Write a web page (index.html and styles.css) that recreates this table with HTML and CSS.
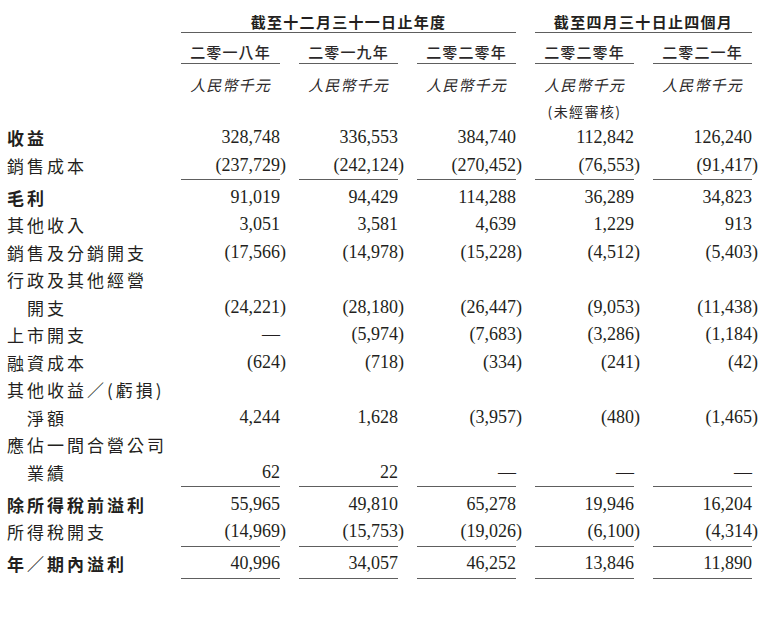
FILE: index.html
```html
<!DOCTYPE html>
<html lang="zh-Hant">
<head>
<meta charset="utf-8">
<title>財務資料</title>
<link rel="stylesheet" href="styles.css">
</head>
<body>
<div class="page">
  <div class="row head1">
    <div></div>
    <div class="hcell span3">截至十二月三十一日止年度</div>
    <div class="hcell span2">截至四月三十日止四個月</div>
  </div>
  <div class="row years">
    <div></div>
    <div class="ycell">二零一八年</div>
    <div class="ycell">二零一九年</div>
    <div class="ycell">二零二零年</div>
    <div class="ycell">二零二零年</div>
    <div class="ycell">二零二一年</div>
  </div>
  <div class="row units">
    <div></div>
    <div class="ucell">人民幣千元</div>
    <div class="ucell">人民幣千元</div>
    <div class="ucell">人民幣千元</div>
    <div class="ucell">人民幣千元</div>
    <div class="ucell">人民幣千元</div>
  </div>
  <div class="row note">
    <div></div><div></div><div></div><div></div>
    <div class="ncell">(未經審核)</div>
    <div></div>
  </div>

  <div class="body">
    <div class="row data first">
      <div class="lbl bold">收益</div>
      <div class="num">328,748</div><div class="num">336,553</div><div class="num">384,740</div><div class="num">112,842</div><div class="num">126,240</div>
    </div>
    <div class="row data ul">
      <div class="lbl">銷售成本</div>
      <div class="num">(237,729<span class="rp">)</span></div><div class="num">(242,124<span class="rp">)</span></div><div class="num">(270,452<span class="rp">)</span></div><div class="num">(76,553<span class="rp">)</span></div><div class="num">(91,417<span class="rp">)</span></div>
    </div>
    <div class="row data after">
      <div class="lbl bold">毛利</div>
      <div class="num">91,019</div><div class="num">94,429</div><div class="num">114,288</div><div class="num">36,289</div><div class="num">34,823</div>
    </div>
    <div class="row data">
      <div class="lbl">其他收入</div>
      <div class="num">3,051</div><div class="num">3,581</div><div class="num">4,639</div><div class="num">1,229</div><div class="num">913</div>
    </div>
    <div class="row data">
      <div class="lbl">銷售及分銷開支</div>
      <div class="num">(17,566<span class="rp">)</span></div><div class="num">(14,978<span class="rp">)</span></div><div class="num">(15,228<span class="rp">)</span></div><div class="num">(4,512<span class="rp">)</span></div><div class="num">(5,403<span class="rp">)</span></div>
    </div>
    <div class="row data">
      <div class="lbl">行政及其他經營</div>
      <div></div><div></div><div></div><div></div><div></div>
    </div>
    <div class="row data">
      <div class="lbl indent">開支</div>
      <div class="num">(24,221<span class="rp">)</span></div><div class="num">(28,180<span class="rp">)</span></div><div class="num">(26,447<span class="rp">)</span></div><div class="num">(9,053<span class="rp">)</span></div><div class="num">(11,438<span class="rp">)</span></div>
    </div>
    <div class="row data">
      <div class="lbl">上市開支</div>
      <div class="num">—</div><div class="num">(5,974<span class="rp">)</span></div><div class="num">(7,683<span class="rp">)</span></div><div class="num">(3,286<span class="rp">)</span></div><div class="num">(1,184<span class="rp">)</span></div>
    </div>
    <div class="row data">
      <div class="lbl">融資成本</div>
      <div class="num">(624<span class="rp">)</span></div><div class="num">(718<span class="rp">)</span></div><div class="num">(334<span class="rp">)</span></div><div class="num">(241<span class="rp">)</span></div><div class="num">(42<span class="rp">)</span></div>
    </div>
    <div class="row data">
      <div class="lbl">其他收益／(虧損)</div>
      <div></div><div></div><div></div><div></div><div></div>
    </div>
    <div class="row data">
      <div class="lbl indent">淨額</div>
      <div class="num">4,244</div><div class="num">1,628</div><div class="num">(3,957<span class="rp">)</span></div><div class="num">(480<span class="rp">)</span></div><div class="num">(1,465<span class="rp">)</span></div>
    </div>
    <div class="row data">
      <div class="lbl">應佔一間合營公司</div>
      <div></div><div></div><div></div><div></div><div></div>
    </div>
    <div class="row data ul">
      <div class="lbl indent">業績</div>
      <div class="num">62</div><div class="num">22</div><div class="num">—</div><div class="num">—</div><div class="num">—</div>
    </div>
    <div class="row data after">
      <div class="lbl bold">除所得稅前溢利</div>
      <div class="num">55,965</div><div class="num">49,810</div><div class="num">65,278</div><div class="num">19,946</div><div class="num">16,204</div>
    </div>
    <div class="row data ul">
      <div class="lbl">所得稅開支</div>
      <div class="num">(14,969<span class="rp">)</span></div><div class="num">(15,753<span class="rp">)</span></div><div class="num">(19,026<span class="rp">)</span></div><div class="num">(6,100<span class="rp">)</span></div><div class="num">(4,314<span class="rp">)</span></div>
    </div>
    <div class="row data after ul">
      <div class="lbl bold">年／期內溢利</div>
      <div class="num">40,996</div><div class="num">34,057</div><div class="num">46,252</div><div class="num">13,846</div><div class="num">11,890</div>
    </div>
  </div>
</div>
</body>
</html>
```

FILE: styles.css
```css
html, body {
  margin: 0;
  padding: 0;
  background: #ffffff;
}

body {
  color: #231f20;
  font-family: "Liberation Serif", "Noto Sans CJK TC", serif;
}

.page {
  width: 765px;
  height: 624px;
  padding: 12px 0 0 7px;
  box-sizing: border-box;
}

.row {
  display: grid;
  grid-template-columns: 155px repeat(5, 99px);
  column-gap: 19px;
}

/* header rows */
.hcell,
.ycell,
.ucell,
.ncell {
  font-family: "Noto Sans CJK TC", "Noto Sans CJK SC", sans-serif;
  text-align: center;
  white-space: nowrap;
}

.head1 .hcell {
  font-size: 15px;
  font-weight: 700;
  letter-spacing: 1.3px;
  line-height: 20px;
  border-bottom: 1.5px solid #5e5e5e;
}

.span3 { grid-column: 2 / span 3; }
.span2 { grid-column: 5 / span 2; }

.years { margin-top: 8px; }
.ycell {
  font-size: 15px;
  font-weight: 500;
  letter-spacing: 1.1px;
  line-height: 22px;
  border-bottom: 1.5px solid #5e5e5e;
  color: #2b2829;
}

.units { margin-top: 11px; }
.ucell {
  font-size: 15px;
  font-style: italic;
  letter-spacing: 1.1px;
  line-height: 20px;
  color: #2b2829;
}

.note { margin-top: 6px; }
.ncell {
  font-size: 14px;
  letter-spacing: 1.4px;
  line-height: 20px;
  color: #2b2829;
}

/* body rows */
.body { margin-top: 3px; }

.row.after { margin-top: 3.5px; }

.lbl {
  font-family: "Noto Sans CJK TC", "Noto Sans CJK SC", sans-serif;
  font-size: 17px;
  letter-spacing: 3px;
  line-height: 27.5px;
  white-space: nowrap;
}

.lbl.bold { font-weight: 700; }
.lbl.indent { padding-left: 20px; }

.num {
  font-family: "Liberation Serif", "Times New Roman", serif;
  font-size: 18px;
  line-height: 27.5px;
  text-align: right;
  white-space: nowrap;
}

.rp { margin-right: -6px; }

.row.ul .num,
.row.ul .num + div {
  border-bottom: 1.5px solid #5e5e5e;
}
```
